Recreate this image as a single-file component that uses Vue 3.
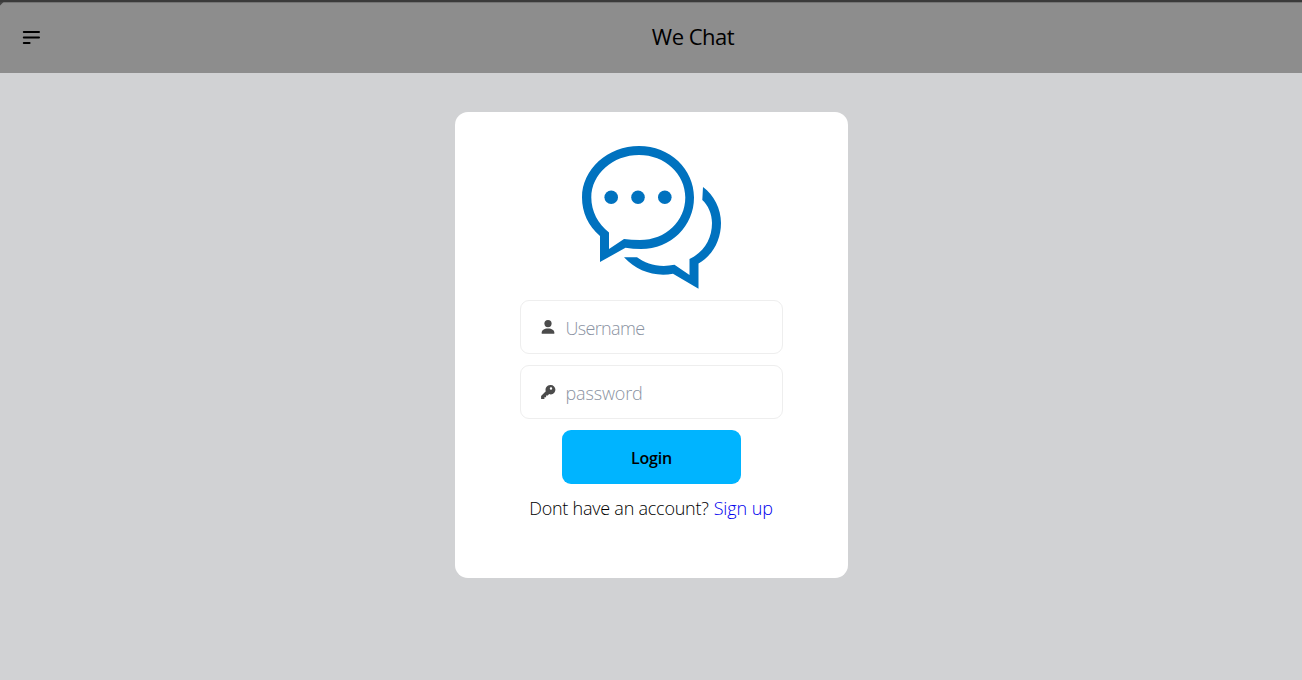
<script setup>
import { ref } from 'vue'

const username = ref('')
const password = ref('')
</script>

<template>
  <div class="page">
    <header class="bar">
      <svg class="menu" width="18" height="15" viewBox="0 0 18 15">
        <path d="M1.8 2H17M1.8 7.5H17M1.8 13H7.6" />
      </svg>
      <h1 class="title">We Chat</h1>
    </header>
    <main class="content">
      <form class="card" @submit.prevent>
        <svg class="logo" width="165" height="165" viewBox="0 0 165 165">
          <path d="M30 101C18 91 12 77 12 62.5C12 34 38 11 69 11C100 11 124 34 124 62.5C124 91 101 114 71 114Q63 114 55.5 112.8L30 127ZM39 97.5V114L54 104Q61 105 70 105C96 105 115.3 86 115.3 62.5C115.3 39 95 20 69 20C43 20 21.3 39 21.3 62.5C21.3 76 28 89 39 97.5Z" />
          <path d="M133 52C144 60 151 74 151 88C151 105 143 120 128.5 128.5V153.8L103 138.8C84 142 67 136 54 122.3L67 122.3C76 129 89 133 104.5 129.8L119.5 140V124C134 117 142 104 142 88C142 79 138 70 132.3 65Z" />
          <circle cx="41.2" cy="62.3" r="6.8" />
          <circle cx="68" cy="62.3" r="6.8" />
          <circle cx="94.8" cy="62.3" r="6.8" />
        </svg>
        <label class="field">
          <svg class="icon" width="16" height="16" viewBox="0 0 16 16">
            <circle cx="8" cy="4.6" r="3.6" />
            <path d="M1.7 14.7V13.6C1.7 11 4 9.4 8 9.4S14.3 11 14.3 13.6V14.7Z" />
          </svg>
          <input v-model="username" class="user" type="text" placeholder="Username" />
        </label>
        <label class="field">
          <svg class="icon" width="16" height="16" viewBox="0 0 16 16">
            <path fill-rule="evenodd" d="M10.2 1A4.7 4.7 0 0 0 5.8 7.3L1.1 11.9V14.9H4.4V13.3H6.1V11.6H7.8L9.1 10.1A4.7 4.7 0 1 0 10.2 1ZM11 3.3A1.2 1.2 0 1 1 11 5.7A1.2 1.2 0 0 1 11 3.3Z" />
          </svg>
          <input v-model="password" class="pass" type="password" placeholder="password" />
        </label>
        <button class="login" type="submit">Login</button>
        <p class="hint"><span class="question">Dont have an account?</span><a class="signup" href="#">Sign up</a></p>
      </form>
    </main>
  </div>
</template>

<style>
body {
  margin: 0;
  overflow: hidden;
}
</style>

<style scoped>
.page {
  display: flex;
  flex-direction: column;
  height: 680px;
  background: #d1d2d4;
  font-family: "Open Sans", "Noto Sans", sans-serif;
  color: #000;
}
.bar {
  box-sizing: border-box;
  display: grid;
  grid-template-columns: 84px 1fr;
  align-items: center;
  height: 73px;
  padding-top: 1px;
  background:
    linear-gradient(135deg, #444 2px, transparent 3px) 0 2px / 6px 6px no-repeat,
    linear-gradient(#3a3a3a 0 2px, #747474 2px 3px, #8d8d8d 3px);
}
.menu {
  margin-left: 22px;
  fill: none;
  stroke: #000;
  stroke-width: 2;
  stroke-linecap: round;
}
.title {
  margin: 0 0 2px;
  text-align: center;
  font-size: 22px;
  font-weight: 400;
  line-height: 30px;
  letter-spacing: -0.5px;
}
.content {
  display: flex;
  justify-content: center;
  padding-top: 39px;
}
.card {
  box-sizing: border-box;
  display: flex;
  flex-direction: column;
  align-items: center;
  width: 393px;
  height: 466px;
  padding-top: 23px;
  border-radius: 13px;
  background: #fff;
}
.logo {
  margin-left: 2px;
  fill: #0072bf;
}
.field {
  box-sizing: border-box;
  display: flex;
  align-items: center;
  width: 263px;
  height: 54px;
  margin-bottom: 11px;
  padding-left: 19px;
  border: 1px solid #eee;
  border-radius: 9px;
}
.icon {
  flex: none;
  fill: #4b4b4b;
}
input {
  width: 195px;
  margin-left: 10px;
  padding: 2px 0 0;
  border: 0;
  outline: 0;
  background: none;
  font: 300 18px/26px "Open Sans", "Noto Sans", sans-serif;
}
.user {
  letter-spacing: -0.65px;
}
.pass {
  letter-spacing: -0.15px;
}
input::placeholder {
  color: #8b93a2;
  opacity: 1;
}
.login {
  width: 179px;
  height: 54px;
  padding: 1px 0 0 1px;
  border: 0;
  border-radius: 9px;
  background: #00b4ff;
  color: #000;
  font: 600 16px/24px "Open Sans", "Noto Sans", sans-serif;
  letter-spacing: -0.2px;
}
.hint {
  display: flex;
  gap: 5px;
  margin: 11px 0 0;
  font-size: 18px;
  font-weight: 350;
  line-height: 26px;
  letter-spacing: -0.24px;
  white-space: nowrap;
}
.signup {
  color: #00e;
  letter-spacing: -0.1px;
  text-decoration: none;
}
</style>
